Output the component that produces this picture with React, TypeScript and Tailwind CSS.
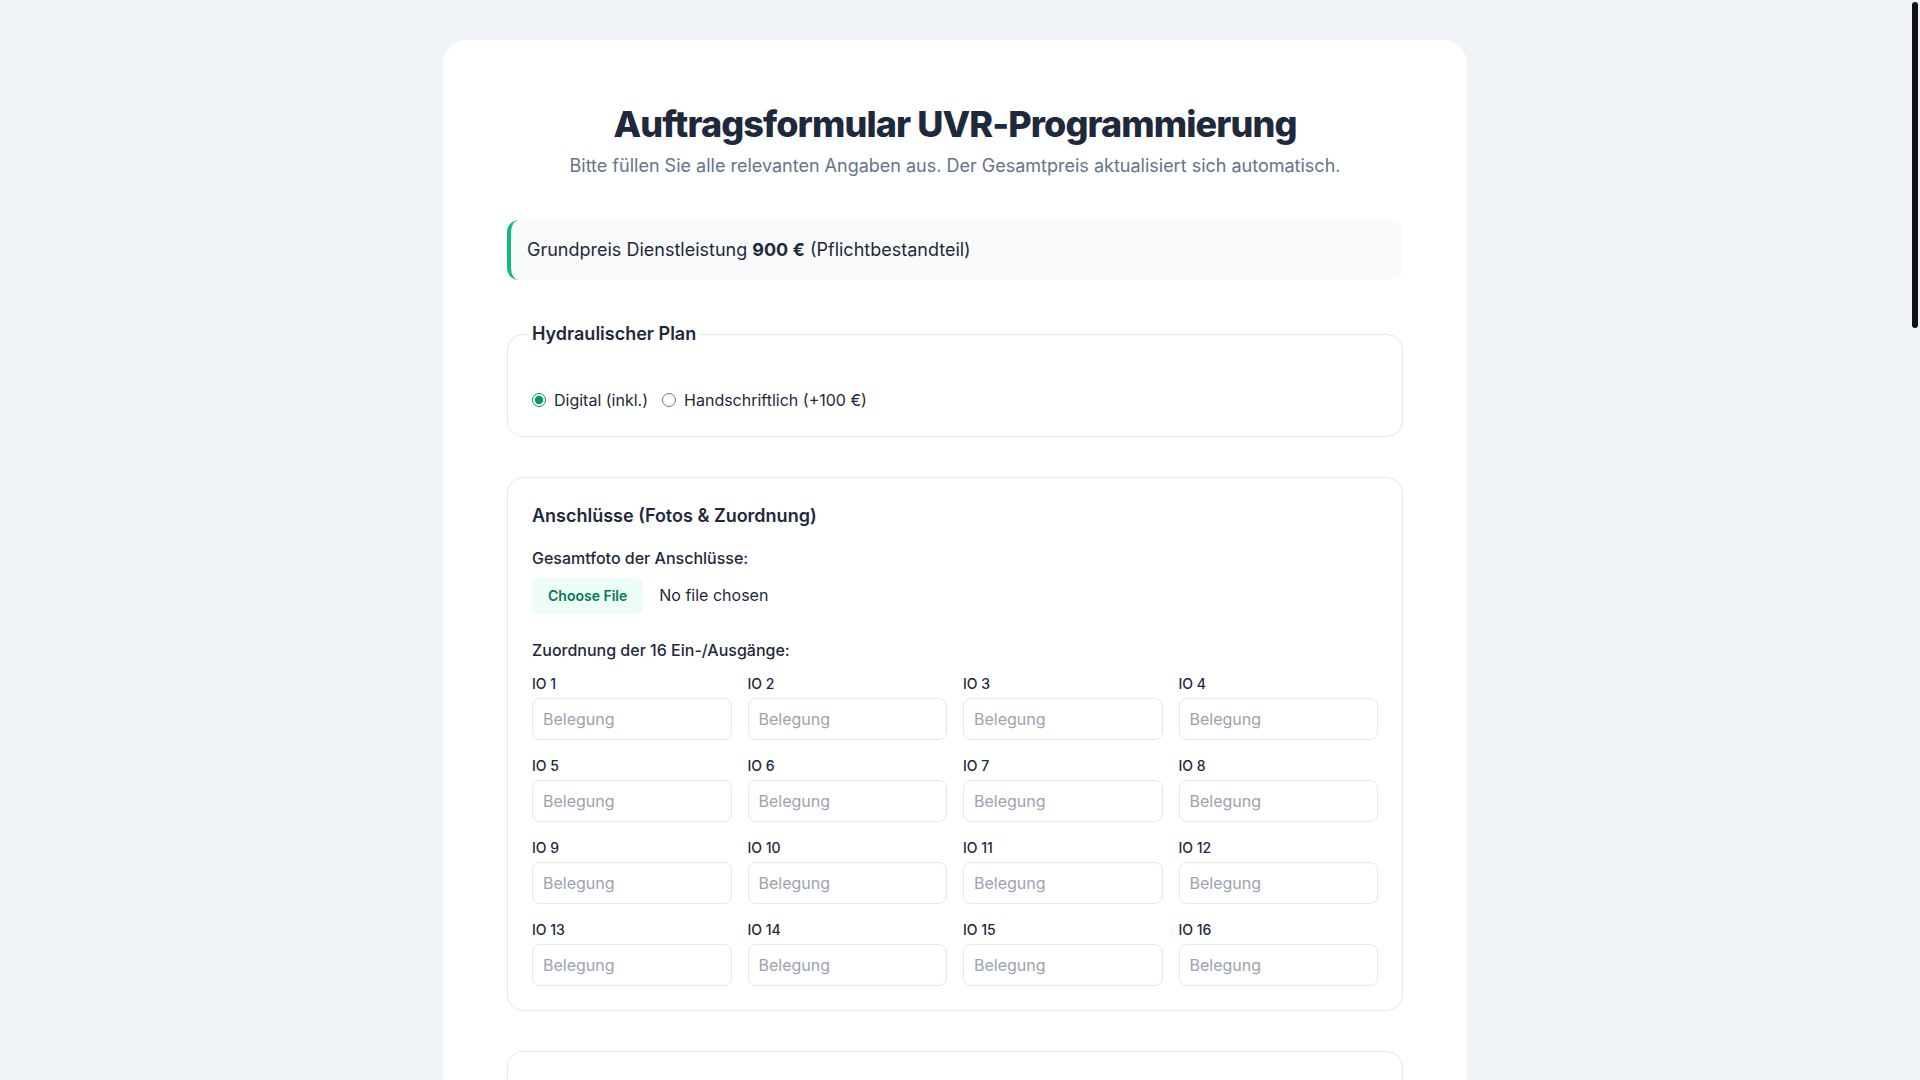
import { useState } from "react";

const ioPorts = Array.from({ length: 16 }, (_, i) => i + 1);
const sensors = ["S1", "S2", "S3", "S4", "S5", "S6", "S7", "S8"];

const funktionen = [
  { id: "solar", label: "Solarregelung (+120 €)" },
  { id: "heizkreis", label: "Heizkreisregelung (+150 €)" },
  { id: "ww", label: "Warmwasserbereitung (+80 €)" },
  { id: "zirk", label: "Zirkulationspumpe (+60 €)" },
  { id: "puffer", label: "Pufferladung (+90 €)" },
  { id: "kessel", label: "Kesselanforderung (+90 €)" },
  { id: "legionellen", label: "Legionellenschutz (+50 €)" },
  { id: "waermemenge", label: "Wärmemengenzählung (+70 €)" },
];

const kontaktFelder = [
  "Vorname",
  "Nachname",
  "Firma",
  "E-Mail",
  "Telefon",
  "Straße",
  "PLZ",
  "Ort",
];

const inputClass =
  "w-full rounded-lg border border-[#e5e7eb] px-2.5 py-2 text-base text-[#1e293b] placeholder:text-[#9ca3af] focus:outline-none";

const App = () => {
  const [plan, setPlan] = useState("digital");
  const [fernzugriff, setFernzugriff] = useState("nein");
  const [belegung, setBelegung] = useState<Record<number, string>>({});
  const [auswahl, setAuswahl] = useState<Record<string, boolean>>({});

  const handleChange = (io: number, value: string) => {
    setBelegung({ ...belegung, [io]: value });
  };

  return (
    <div
      className="min-h-screen bg-[#f0f4f8] pt-10 pr-[10px] pb-24 text-[#1e293b]"
      style={{ fontFamily: "Inter, 'Noto Sans', 'Liberation Sans', sans-serif" }}
    >
      {/* scrollbar thumb like in the browser */}
      <div className="fixed top-[2px] right-[2px] h-[326px] w-[6px] rounded-full bg-[#111111]" />

      <div className="mx-auto w-[1024px] rounded-3xl bg-white p-16">
        <div className="mb-10 text-center">
          <h1 className="text-4xl font-extrabold tracking-tight text-[#1e293b]">
            Auftragsformular UVR-Programmierung
          </h1>
          <p className="mt-2 text-lg text-[#64748b]">
            Bitte füllen Sie alle relevanten Angaben aus. Der Gesamtpreis aktualisiert sich automatisch.
          </p>
        </div>

        <div className="rounded-xl border-l-4 border-[#10b981] bg-[#f8fafc] px-4 py-4 text-lg text-[#1e293b]">
          Grundpreis Dienstleistung <strong className="font-bold">900 €</strong> (Pflichtbestandteil)
        </div>

        <fieldset className="mt-10 rounded-2xl border border-[#e5e7eb] px-6 pb-6">
          <legend className="-ml-1 px-1 text-lg font-semibold text-[#1e293b]">
            Hydraulischer Plan
          </legend>
          <div className="mt-10 flex items-center gap-[14px] text-base text-[#1e293b]">
            <label className="flex items-center gap-2">
              <input
                type="radio"
                name="plan"
                value="digital"
                checked={plan === "digital"}
                onChange={() => setPlan("digital")}
                className="h-[14px] w-[14px] accent-[#059669]"
              />
              Digital (inkl.)
            </label>
            <label className="flex items-center gap-2">
              <input
                type="radio"
                name="plan"
                value="hand"
                checked={plan === "hand"}
                onChange={() => setPlan("hand")}
                className="h-[14px] w-[14px] accent-[#059669]"
              />
              Handschriftlich (+100 €)
            </label>
          </div>
        </fieldset>

        <div className="mt-10 rounded-2xl border border-[#e5e7eb] p-6">
          <h2 className="mb-4 text-lg font-semibold text-[#1e293b]">
            Anschlüsse (Fotos &amp; Zuordnung)
          </h2>
          <label className="mb-2 block text-base font-medium text-[#1e293b]">
            Gesamtfoto der Anschlüsse:
          </label>
          <input
            type="file"
            accept="image/*"
            className="block text-base text-[#1e293b] file:mr-4 file:rounded-lg file:border-0 file:bg-[#ecfdf5] file:px-4 file:py-2 file:text-sm file:font-semibold file:text-[#047857]"
          />

          <p className="mt-6 mb-3 text-base font-medium text-[#1e293b]">
            Zuordnung der 16 Ein-/Ausgänge:
          </p>
          <div className="grid grid-cols-4 gap-4">
            {ioPorts.map((io) => (
              <div key={io}>
                <label className="mb-1 block text-sm font-medium text-[#1e293b]">
                  IO {io}
                </label>
                <input
                  type="text"
                  placeholder="Belegung"
                  value={belegung[io] ?? ""}
                  onChange={(e) => handleChange(io, e.target.value)}
                  className={inputClass}
                />
              </div>
            ))}
          </div>
        </div>

        <div className="mt-10 rounded-2xl border border-[#e5e7eb] p-6">
          <h2 className="mb-4 text-lg font-semibold text-[#1e293b]">Sensoren</h2>
          <div className="grid grid-cols-4 gap-4">
            {sensors.map((s) => (
              <div key={s}>
                <label className="mb-1 block text-sm font-medium text-[#1e293b]">{s}</label>
                <input type="text" placeholder="Typ / Ort" className={inputClass} />
              </div>
            ))}
          </div>
        </div>

        <div className="mt-10 rounded-2xl border border-[#e5e7eb] p-6">
          <h2 className="mb-4 text-lg font-semibold text-[#1e293b]">Regelfunktionen</h2>
          <div className="space-y-3 text-base">
            {funktionen.map((f) => (
              <label key={f.id} className="flex items-center gap-2">
                <input
                  type="checkbox"
                  checked={!!auswahl[f.id]}
                  onChange={(e) => setAuswahl({ ...auswahl, [f.id]: e.target.checked })}
                  className="h-4 w-4 accent-[#059669]"
                />
                {f.label}
              </label>
            ))}
          </div>
        </div>

        <fieldset className="mt-10 rounded-2xl border border-[#e5e7eb] px-6 pb-6">
          <legend className="-ml-1 px-1 text-lg font-semibold text-[#1e293b]">Fernzugriff</legend>
          <div className="mt-10 flex items-center gap-[14px] text-base">
            <label className="flex items-center gap-2">
              <input
                type="radio"
                name="fern"
                checked={fernzugriff === "nein"}
                onChange={() => setFernzugriff("nein")}
                className="h-[14px] w-[14px] accent-[#059669]"
              />
              Nicht benötigt
            </label>
            <label className="flex items-center gap-2">
              <input
                type="radio"
                name="fern"
                checked={fernzugriff === "ja"}
                onChange={() => setFernzugriff("ja")}
                className="h-[14px] w-[14px] accent-[#059669]"
              />
              Einrichtung C.M.I. (+150 €)
            </label>
          </div>
        </fieldset>

        <div className="mt-10 rounded-2xl border border-[#e5e7eb] p-6">
          <h2 className="mb-4 text-lg font-semibold text-[#1e293b]">Kontaktdaten</h2>
          <div className="grid grid-cols-2 gap-4">
            {kontaktFelder.map((k) => (
              <div key={k}>
                <label className="mb-1 block text-sm font-medium text-[#1e293b]">{k}</label>
                <input type="text" placeholder={k} className={inputClass} />
              </div>
            ))}
          </div>
        </div>

        <div className="mt-10 rounded-2xl border border-[#e5e7eb] p-6">
          <h2 className="mb-4 text-lg font-semibold text-[#1e293b]">Bemerkungen</h2>
          <textarea rows={8} placeholder="Weitere Hinweise zur Anlage" className={inputClass} />
        </div>

        <div className="mt-10 flex items-center justify-between rounded-xl border-l-4 border-[#10b981] bg-[#f8fafc] px-6 py-6">
          <span className="text-lg">Gesamtpreis (netto)</span>
          <span className="text-2xl font-bold">900 €</span>
        </div>

        <label className="mt-8 flex items-center gap-2 text-base">
          <input type="checkbox" className="h-4 w-4 accent-[#059669]" />
          Ich akzeptiere die Auftragsbedingungen.
        </label>

        <button className="mt-6 w-full rounded-xl bg-[#059669] py-4 text-lg font-semibold text-white">
          Auftrag absenden
        </button>
      </div>
    </div>
  );
};

export default App;
